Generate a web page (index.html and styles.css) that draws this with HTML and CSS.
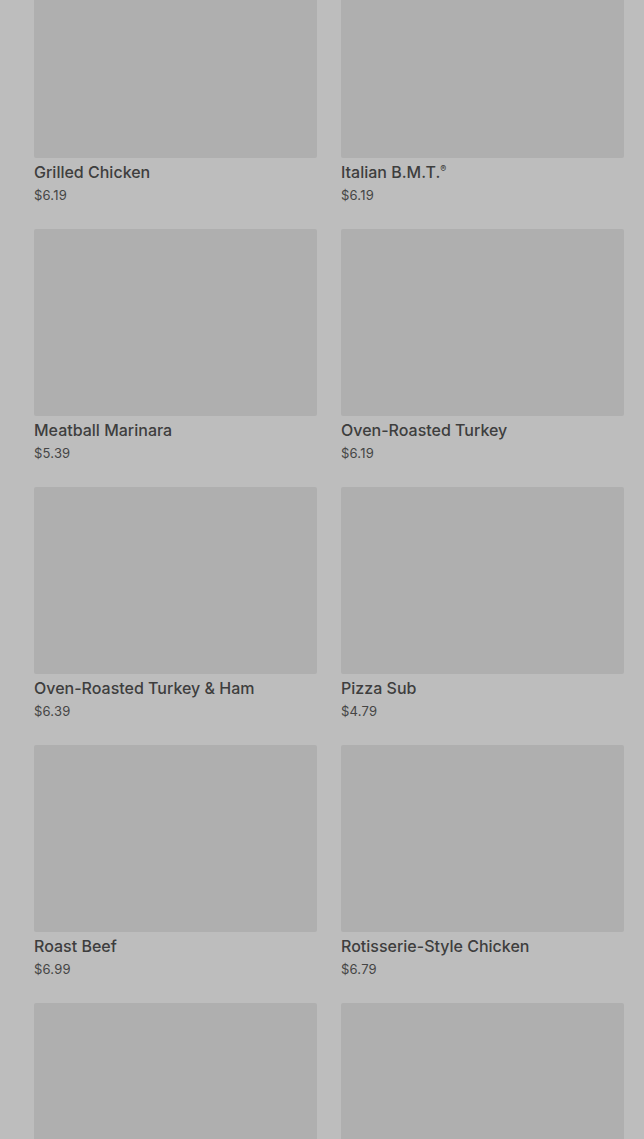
FILE: index.html
```html
<!DOCTYPE html>
<html lang="en">
<head>
<meta charset="utf-8">
<title>Menu</title>
<link rel="stylesheet" href="styles.css">
</head>
<body>
<main class="grid">
  <div class="card"><div class="img"></div><div class="name">Grilled Chicken</div><div class="price">$6.19</div></div>
  <div class="card"><div class="img"></div><div class="name">Italian B.M.T.<sup>®</sup></div><div class="price">$6.19</div></div>
  <div class="card"><div class="img"></div><div class="name">Meatball Marinara</div><div class="price">$5.39</div></div>
  <div class="card"><div class="img"></div><div class="name">Oven-Roasted Turkey</div><div class="price">$6.19</div></div>
  <div class="card"><div class="img"></div><div class="name">Oven-Roasted Turkey &amp; Ham</div><div class="price">$6.39</div></div>
  <div class="card"><div class="img"></div><div class="name">Pizza Sub</div><div class="price">$4.79</div></div>
  <div class="card"><div class="img"></div><div class="name">Roast Beef</div><div class="price">$6.99</div></div>
  <div class="card"><div class="img"></div><div class="name">Rotisserie-Style Chicken</div><div class="price">$6.79</div></div>
  <div class="card"><div class="img"></div><div class="name">&nbsp;</div><div class="price">&nbsp;</div></div>
  <div class="card"><div class="img"></div><div class="name">&nbsp;</div><div class="price">&nbsp;</div></div>
</main>
</body>
</html>
```

FILE: styles.css
```css
html, body {
  margin: 0;
  padding: 0;
  background: #bdbdbd;
  overflow: hidden;
}
body {
  font-family: Inter, Roboto, "Liberation Sans", sans-serif;
  color: #3e3e3e;
}
.grid {
  display: grid;
  grid-template-columns: 283px 283px;
  column-gap: 24px;
  row-gap: 24px;
  padding: 0 20px 0 34px;
  margin-top: -29px;
}
.card {
  display: flex;
  flex-direction: column;
}
.img {
  height: 187px;
  background: #afafaf;
  border-radius: 2px;
}
.name {
  margin-top: 2px;
  font-size: 16px;
  font-weight: 500;
  line-height: 24px;
}
.name sup {
  font-size: 9px;
  line-height: 0;
  vertical-align: 6px;
}
.price {
  margin-top: 1px;
  font-size: 13px;
  line-height: 20px;
  letter-spacing: 0.2px;
  color: #454545;
}
```
